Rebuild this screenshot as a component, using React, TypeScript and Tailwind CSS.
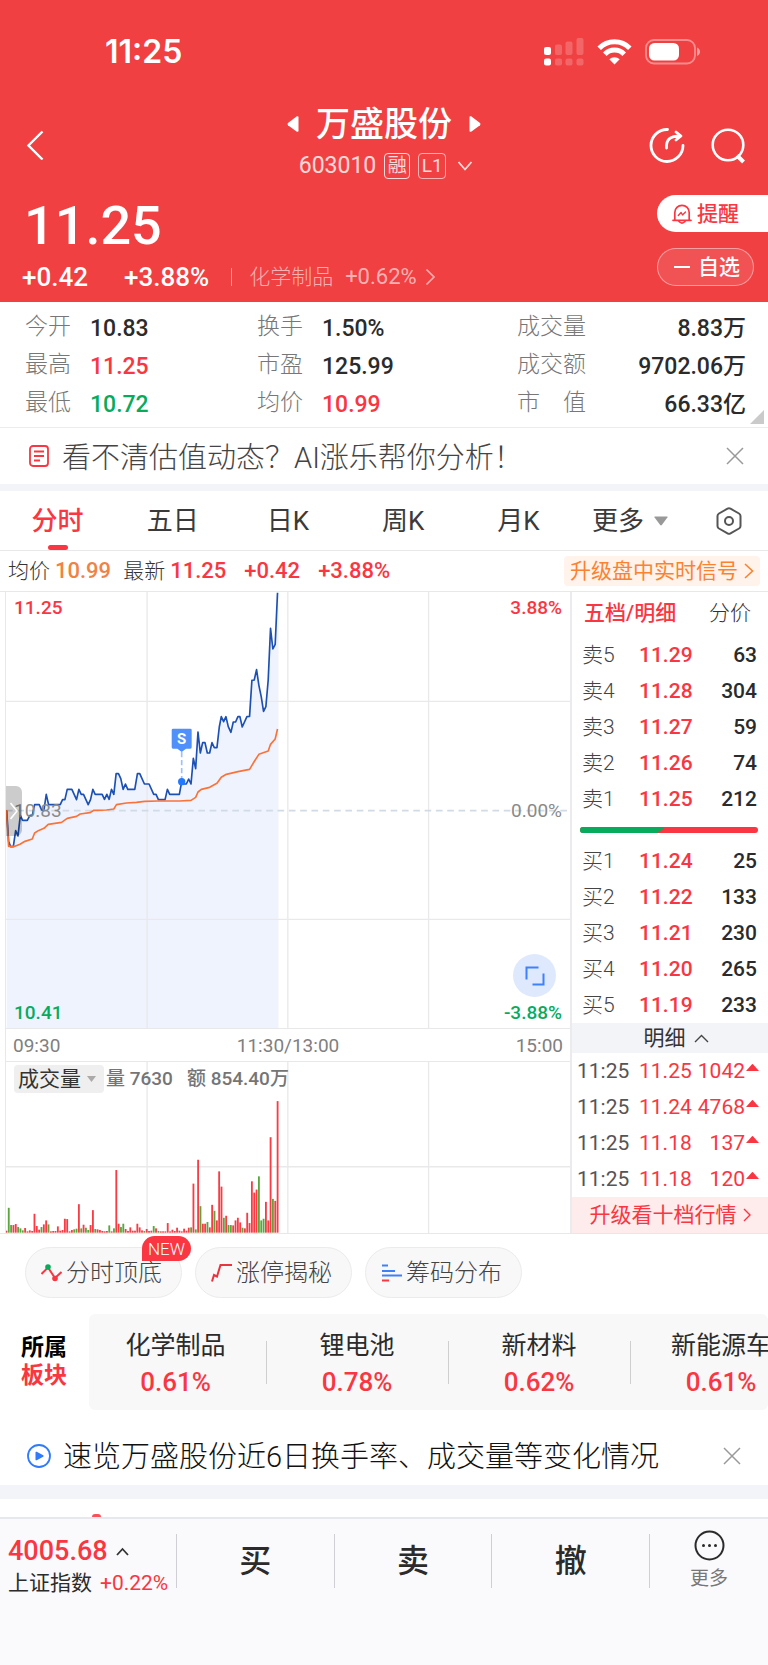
import React from "react";

const RED = "text-[#f93641]";
const GREEN = "text-[#08ab5c]";
const INK = "text-[#2b2b2b]";

const stats = [
  [
    { label: "今开", value: "10.83", tone: INK },
    { label: "最高", value: "11.25", tone: RED },
    { label: "最低", value: "10.72", tone: GREEN },
  ],
  [
    { label: "换手", value: "1.50%", tone: INK },
    { label: "市盈", value: "125.99", tone: INK },
    { label: "均价", value: "10.99", tone: RED },
  ],
  [
    { label: "成交量", value: "8.83万", tone: INK },
    { label: "成交额", value: "9702.06万", tone: INK },
    { label: "市　值", value: "66.33亿", tone: INK },
  ],
];

const sells = [
  ["卖5", "11.29", "63"],
  ["卖4", "11.28", "304"],
  ["卖3", "11.27", "59"],
  ["卖2", "11.26", "74"],
  ["卖1", "11.25", "212"],
];

const buys = [
  ["买1", "11.24", "25"],
  ["买2", "11.22", "133"],
  ["买3", "11.21", "230"],
  ["买4", "11.20", "265"],
  ["买5", "11.19", "233"],
];

const trades = [
  ["11:25", "11.25", "1042"],
  ["11:25", "11.24", "4768"],
  ["11:25", "11.18", "137"],
  ["11:25", "11.18", "120"],
];

const sectors = [
  ["化学制品", "0.61%"],
  ["锂电池", "0.78%"],
  ["新材料", "0.62%"],
  ["新能源车", "0.61%"],
];

const priceLine =
  "20,692 26,785 32,800 40,800 47,752 54,768 61,706 68,721 82,721 90,706 97,706 104,674 118,674 125,690 132,690 139,643 146,674 181,674 188,659 195,659 202,628 216,628 230,659 237,628 244,643 251,643 265,674 272,659 279,628 286,643 307,643 314,658 321,643 328,658 335,628 342,643 349,581 356,581 363,596 370,628 377,612 384,628 405,628 413,581 420,581 434,612 448,612 462,643 469,643 476,659 496,659 503,628 510,643 539,643 546,605 553,612 560,612 567,597 574,612 581,535 588,566 595,456 602,519 609,488 616,488 623,519 630,519 637,488 644,503 652,503 659,441 665,410 672,425 679,410 686,440 694,457 701,426 708,426 715,410 721,410 728,441 742,410 750,409 757,301 764,300 771,269 778,316 785,350 792,394 799,380 806,300 813,145 820,207 827,193 834,38";

const averageLine =
  "19,690 26,799 45,799 60,793 75,784 97,777 104,759 115,752 132,745 145,733 185,727 202,715 230,709 241,702 270,698 282,691 320,690 342,687 350,674 380,669 410,667 435,664 475,663 540,663 574,661 588,652 595,636 605,628 630,622 652,610 665,592 680,583 715,575 750,568 765,543 778,523 806,513 813,493 827,477 834,447";

// Traded volume per minute; a negative number marks a falling minute.
const volumes = [
  6, -75, -23, 23, 26, -17, -13, -7, 14, 4, 7, 5, 57, 20, 9, -17, 25, 37, -25, 4, 5, 5, 19, 6, 8, 42, 41, 4, 8, -10,
  -12, 86, -13, 24, -15, -8, 23, 68, -11, 10, 8, 5, 4, 5, -22, 4, -13, 189, 27, -17, -27, 11, 5, 16, 6, 6, 27, 16, 7,
  -5, 11, 5, 6, -20, 13, -5, 4, 4, 4, 29, 4, 9, 5, 15, 6, 4, 12, 6, 15, -16, 148, -10, 220, -80, 27, 27, -32, 16, 84,
  -66, 37, 185, 139, -45, 51, -23, -23, 22, 37, 45, 31, -15, 13, 60, 29, 155, 121, 130, -170, -37, -42, 93, 37, 288,
  -102, 96, 397,
];

function StatusBar() {
  return (
    <div className="flex h-20 items-center justify-between pt-6 pr-[67px] pl-[105px]">
      <span className="font-[Inter,sans-serif] text-[32px] leading-10 font-semibold">11:25</span>
      <div className="flex items-center gap-[13px]">
        <svg className="h-7 w-10" viewBox="0 0 40 28" fill="#fff" aria-hidden="true">
          <rect x="0" y="9" width="7" height="8" rx="2" />
          <rect x="0" y="20.500" width="7" height="7" rx="2" />
          <g opacity="0.2">
            <rect x="11" y="6.500" width="7" height="10.500" rx="2" />
            <rect x="11" y="20.500" width="7" height="7" rx="2" />
            <rect x="21.500" y="3.500" width="7" height="13.500" rx="2" />
            <rect x="21.500" y="20.500" width="7" height="7" rx="2" />
            <rect x="32.500" y="0" width="7" height="17" rx="2" />
            <rect x="32.500" y="20.500" width="7" height="7" rx="2" />
          </g>
        </svg>
        <svg className="h-[26px] w-[35px]" viewBox="0 0 35 26" fill="none" stroke="#fff" strokeWidth="5" aria-hidden="true">
          <path d="M2.200 9.200A21.500 21.500 0 0 1 32.800 9.200" />
          <path d="M7.800 15.200A13.500 13.500 0 0 1 27.200 15.200" />
          <path d="M17.500 25.500l-5.200-5.200a7.400 7.400 0 0 1 10.400 0z" fill="#fff" stroke="none" />
        </svg>
        <svg className="h-[26px] w-14" viewBox="0 0 56 26" aria-hidden="true">
          <rect x="1" y="1" width="49" height="23.500" rx="8" fill="none" stroke="#fff" strokeOpacity="0.4" strokeWidth="1.800" />
          <rect x="4" y="4" width="30" height="17.500" rx="5.500" fill="#fff" />
          <path d="M52 8.500c4 1.500 4 7 0 8.500z" fill="#fff" fillOpacity="0.5" />
        </svg>
      </div>
    </div>
  );
}

function Header() {
  return (
    <header className="bg-[#f04042] text-white">
      <StatusBar />
      <div className="flex h-[109px] items-start justify-between px-[22px]">
        <button type="button" aria-label="返回" className="mt-12 w-[120px] pl-1">
          <svg className="h-8 w-5" viewBox="0 0 20 32" fill="none" stroke="#fff" strokeWidth="2.400">
            <path d="M16.500 3.500L2.500 17.500l14 14" />
          </svg>
        </button>
        <div className="flex flex-col items-center pt-[22px]">
          <div className="flex items-center gap-[17px]">
            <button type="button" aria-label="上一只">
              <svg className="h-4 w-3" viewBox="0 0 12 16" fill="#fff">
                <path d="M11.500 1v14c0 1-1 1-2 .4L1 9.200Q0 8 1 7L9.500.6c1-.6 2-.6 2 .4z" />
              </svg>
            </button>
            <h1 className="text-[34px] leading-[44px] font-medium">万盛股份</h1>
            <button type="button" aria-label="下一只">
              <svg className="h-4 w-3" viewBox="0 0 12 16" fill="#fff">
                <path d="M.500 1v14c0 1 1 1 2 .4L11 9.200Q12 8 11 7L2.500.6C1.500 0 .500 0 .500 1z" />
              </svg>
            </button>
          </div>
          <button type="button" className="flex h-10 items-center gap-2 pl-1 text-white/80">
            <span className="text-[23px] leading-7">603010</span>
            <span className="flex h-[26px] w-[26px] items-center justify-center rounded border border-white/80 text-[19px] leading-6">融</span>
            <span className="flex h-[26px] w-7 items-center justify-center rounded border border-white/60 text-[19px] leading-6">L1</span>
            <svg className="ml-[3px] h-3 w-4" viewBox="0 0 16 12" fill="none" stroke="currentColor" strokeWidth="1.800">
              <path d="M1.500 2L8 9.500 14.500 2" />
            </svg>
          </button>
        </div>
        <div className="flex w-[120px] justify-end gap-[25px] pt-12">
          <button type="button" aria-label="分享">
            <svg className="h-9 w-9" viewBox="0 0 36 36" fill="none" stroke="#fff" strokeWidth="2.800" strokeLinecap="round" strokeLinejoin="round">
              <path d="M18.500 1.500A16 16 0 1 0 34 17.500" />
              <path d="M17.500 20c-.5-9 4-12 14-12M27 4l5 4-5 4" />
            </svg>
          </button>
          <button type="button" aria-label="搜索">
            <svg className="h-9 w-9" viewBox="0 0 36 36" fill="none" stroke="#fff" strokeWidth="2.600">
              <circle cx="18" cy="17" r="15.300" />
              <path d="M27 27.500l6.500 6.500" strokeWidth="4" />
            </svg>
          </button>
        </div>
      </div>
      <div className="flex justify-between pb-[10px]">
        <div className="pl-[22px]">
          <div className="h-[73px] pl-[2px] text-[54px] leading-[73px] font-medium">11.25</div>
          <div className="flex h-[30px] items-center leading-[30px]">
            <span className="text-[26px] font-medium">+0.42</span>
            <span className="ml-9 text-[26px] font-medium">+3.88%</span>
            <span className="ml-[22px] h-[18px] w-px bg-white/50" />
            <a href="#sector" className="ml-[17px] flex items-center text-white/60">
              <span className="text-[21px] font-light">化学制品</span>
              <span className="ml-3 text-[22px]">+0.62%</span>
              <svg className="ml-2 h-[18px] w-3" viewBox="0 0 12 18" fill="none" stroke="currentColor" strokeWidth="1.600">
                <path d="M1.500 1.500L9 9l-7.500 7.500" />
              </svg>
            </a>
          </div>
        </div>
        <div className="flex w-[111px] flex-col gap-4 pt-[6px]">
          <button type="button" className="flex h-[37px] items-center gap-[5px] rounded-l-full bg-white pl-[15px] text-[21px] leading-7 font-medium text-[#f93641]">
            <svg className="h-5 w-5" viewBox="0 0 20 20" fill="none" stroke="currentColor" strokeWidth="1.700" strokeLinecap="round" strokeLinejoin="round">
              <path d="M2.800 16V8.500a7.200 7.200 0 0 1 14.400 0V16M1 16.300h18M7 17.500q3 3 6 0" />
              <path d="M6.300 11.500l2.800-3 1.400 2.500 3-3" strokeWidth="1.400" />
            </svg>
            提醒
          </button>
          <button type="button" className="flex h-[38px] w-[97px] items-center gap-2 rounded-full border border-white/45 bg-white/10 pl-4 text-[21px] leading-7 font-medium">
            <span className="h-[2px] w-4 bg-white" />
            自选
          </button>
        </div>
      </div>
    </header>
  );
}

function Stats() {
  return (
    <section className="relative grid h-[126px] grid-cols-[232px_260px_1fr] border-b border-[#ececee] pt-[6px] pr-[22px] pl-[25px]">
      {stats.map((column, i) => (
        <dl key={i}>
          {column.map((item) => (
            <div key={item.label} className={i === 2 ? "flex h-[38px] items-center justify-between" : "flex h-[38px] items-center"}>
              <dt className={i === 2 ? "text-[23px] leading-8 font-light whitespace-pre text-[#777]" : "w-[65px] text-[23px] leading-8 font-light text-[#777]"}>
                {item.label}
              </dt>
              <dd className={"pt-[3px] text-[23px] leading-8 font-medium " + item.tone}>{item.value}</dd>
            </div>
          ))}
        </dl>
      ))}
      <svg className="absolute right-1 bottom-[3px] h-[14px] w-[14px]" viewBox="0 0 14 14" fill="#cacaca" aria-hidden="true">
        <path d="M14 0v14H0z" />
      </svg>
    </section>
  );
}

function CloseIcon() {
  return (
    <svg className="h-[18px] w-[18px]" viewBox="0 0 18 18" fill="none" stroke="#999" strokeWidth="1.500">
      <path d="M1 1l16 16M17 1L1 17" />
    </svg>
  );
}

function Tabs() {
  const tab = "text-[26px] leading-9 text-[#3a3a3a]";
  return (
    <nav className="flex h-[60px] items-center border-b border-[#e8e8ea] pr-[26px]">
      <button type="button" className="relative h-full flex-1 text-[26px] leading-9 font-medium text-[#f93641]">
        分时
        <span className="absolute inset-x-0 bottom-0 mx-auto h-[5px] w-5 rounded-full bg-[#f93641]" />
      </button>
      <button type="button" className={"flex-1 " + tab}>五日</button>
      <button type="button" className={"flex-1 " + tab}>日K</button>
      <button type="button" className={"flex-1 " + tab}>周K</button>
      <button type="button" className={"flex-1 " + tab}>月K</button>
      <button type="button" className={"ml-4 flex items-center gap-[10px] " + tab}>
        更多
        <svg className="h-[10px] w-[14px]" viewBox="0 0 14 10" fill="#999">
          <path d="M1 .5h12q1 0 .4 1L7.800 9q-.8.800-1.600 0L.6 1.500Q0 .5 1 .5z" />
        </svg>
      </button>
      <button type="button" aria-label="设置" className="ml-[48px]">
        <svg className="h-7 w-[26px]" viewBox="0 0 26 28" fill="none" stroke="#555" strokeWidth="2" strokeLinejoin="round">
          <path d="M11.500 1.700q1.500-.8 3 0l8.500 4.800q1.500.900 1.500 2.500v10q0 1.600-1.500 2.500l-8.500 4.800q-1.500.800-3 0L3 21.500Q1.500 20.600 1.500 19V9Q1.500 7.400 3 6.500z" />
          <circle cx="13" cy="14" r="4" />
        </svg>
      </button>
    </nav>
  );
}

function PriceChart() {
  const label = "absolute text-[19px] leading-6 ";
  return (
    <div className="relative h-[436px]">
      <svg className="h-full w-full" viewBox="18 36 1695 1308" preserveAspectRatio="none" fill="none" aria-hidden="true">
        <polygon points={"20,1344 " + priceLine + " 837,38 837,1344"} fill="#eff3fe" />
        <path d="M442 36V1344M865 36V1344M1288 36V1344M18 364H1713M18 1018H1713" stroke="#e9e9eb" strokeWidth="4" />
        <path d="M18 692H1713" stroke="#d0dbe6" strokeWidth="5" strokeDasharray="20 14" />
        <polyline points={priceLine} stroke="#1c50b5" strokeWidth="5" strokeLinejoin="round" />
        <polyline points={averageLine} stroke="#fb7238" strokeWidth="5" strokeLinejoin="round" />
        <path d="M546 516v90" stroke="#9dc0fb" strokeWidth="5" strokeDasharray="16 8" />
        <circle cx="546" cy="605" r="11" fill="#2079ff" />
        <path d="M520 446h52q4 0 4 4v52q0 4-4 4h-13l-13 10-13-10h-13q-4 0-4-4v-52q0-4 4-4z" fill="#5090fb" />
        <text x="546" y="491" textAnchor="middle" fill="#fff" fontSize="45" fontWeight="700">S</text>
      </svg>
      <span className={label + "top-1 left-2 font-medium text-[#f93641]"}>11.25</span>
      <span className={label + "top-1 right-2 font-medium text-[#f93641]"}>3.88%</span>
      <span className={label + "top-[207px] left-2 text-[#8a8a8a]"}>10.83</span>
      <span className={label + "top-[207px] right-2 text-[#8a8a8a]"}>0.00%</span>
      <span className={label + "bottom-[3px] left-2 font-medium text-[#08ab5c]"}>10.41</span>
      <span className={label + "right-2 bottom-[3px] font-medium text-[#08ab5c]"}>-3.88%</span>
      <button type="button" aria-label="展开侧栏" className="absolute top-[194px] left-0 flex h-[50px] w-4 items-center justify-center rounded-r-md bg-black/20">
        <svg className="h-[18px] w-2" viewBox="0 0 8 18" fill="none" stroke="#fff" strokeWidth="1.600">
          <path d="M.5 1l6.500 8-6.500 8" />
        </svg>
      </button>
      <button type="button" aria-label="全屏" className="absolute right-[14px] bottom-[31px] flex h-[43px] w-[43px] items-center justify-center rounded-full bg-[#dfe9fd]">
        <svg className="h-5 w-5" viewBox="0 0 20 20" fill="none" stroke="#3f80fb" strokeWidth="2">
          <path d="M1.500 13.500V1.500H13.500M18.500 7.500V18.500H7.500" />
        </svg>
      </button>
    </div>
  );
}

function VolumeChart() {
  return (
    <div className="relative h-[172px] border-t border-[#e8e8ea]">
      <svg className="h-full w-full" viewBox="18 185 1695 516" preserveAspectRatio="none" aria-hidden="true">
        <path d="M442 185V701M865 185V701M1288 185V701M18 501H1713" stroke="#e9e9eb" strokeWidth="4" />
        {volumes.map((v, i) => (
          <rect
            key={i}
            x={16.5 + (i * 815) / (volumes.length - 1)}
            y={700 - Math.abs(v)}
            width="5.500"
            height={Math.abs(v)}
            fill={v < 0 ? "#58a63c" : "#fa3b44"}
          />
        ))}
      </svg>
      <div className="absolute top-[3px] left-2 flex items-center text-[19px] leading-7 text-[#757575]">
        <button type="button" className="flex h-7 items-center gap-[6px] rounded bg-[#efefef] pr-2 pl-1 text-[21px] text-[#333]">
          成交量
          <svg className="h-[6px] w-[9px]" viewBox="0 0 9 6" fill="#aaa">
            <path d="M0 0h9L4.500 6z" />
          </svg>
        </button>
        <span className="ml-[2px] font-medium">量 7630</span>
        <span className="ml-[14px] font-medium">额 854.40万</span>
      </div>
    </div>
  );
}

function QuoteRows({ rows }: { rows: string[][] }) {
  return (
    <table className="w-full table-fixed">
      <tbody>
        {rows.map(([name, price, count]) => (
          <tr key={name} className="h-9 leading-9">
            <th scope="row" className="w-[67px] pl-[10px] text-left text-[21px] font-light text-[#444]">{name}</th>
            <td className="text-[21px] font-medium text-[#f93641]">{price}</td>
            <td className="w-20 pr-[11px] text-right text-[21px] font-medium text-[#2b2b2b]">{count}</td>
          </tr>
        ))}
      </tbody>
    </table>
  );
}

function OrderBook() {
  return (
    <aside className="flex flex-col border-l-2 border-[#ebebed]">
      <div className="flex h-[45px] items-center justify-between pr-[17px] pb-1 pl-3 text-[21px] leading-8">
        <button type="button" className="font-medium text-[#f93641]">五档/明细</button>
        <button type="button" className="font-light text-[#333]">分价</button>
      </div>
      <QuoteRows rows={sells} />
      <svg className="mr-[10px] ml-2 my-[10px] h-[6px] self-stretch" viewBox="0 0 177 6" preserveAspectRatio="none" aria-hidden="true">
        <rect width="177" height="6" rx="3" fill="#f93641" />
        <path d="M3 0H85L77 6H3A3 3 0 0 1 3 0z" fill="#08ab5c" />
      </svg>
      <QuoteRows rows={buys} />
      <button type="button" className="flex h-[30px] items-center justify-center gap-2 bg-[#f3f4f8] pl-3 text-[21px] leading-7 text-[#333]">
        明细
        <svg className="h-[9px] w-[15px]" viewBox="0 0 15 9" fill="none" stroke="#444" strokeWidth="1.400">
          <path d="M1 8l6.500-6.500L14 8" />
        </svg>
      </button>
      <table className="w-full table-fixed">
        <tbody>
          {trades.map(([time, price, count]) => (
            <tr key={price + count} className="h-9 text-[21px] leading-9">
              <td className="w-[67px] pl-[5px] text-[#555]">{time}</td>
              <td className="text-[#f93641]">{price}</td>
              <td className="w-[70px] pr-[9px] text-[#f93641]">
                <span className="flex items-center justify-end gap-px">
                  {count}
                  <svg className="mb-2 h-[7px] w-[13px] shrink-0" viewBox="0 0 13 7" fill="#f93641">
                    <path d="M0 7L6 .3q.5-.5 1 0L13 7z" />
                  </svg>
                </span>
              </td>
            </tr>
          ))}
        </tbody>
      </table>
      <button type="button" className="flex flex-1 items-center justify-center gap-[6px] bg-[#feeced] text-[21px] leading-8 text-[#f93641]">
        升级看十档行情
        <svg className="h-[14px] w-2" viewBox="0 0 8 14" fill="none" stroke="currentColor" strokeWidth="1.400">
          <path d="M1 1l6 6-6 6" />
        </svg>
      </button>
    </aside>
  );
}

function Market() {
  return (
    <section>
      <div className="flex h-10 items-center justify-between pr-2 pl-2 leading-8">
        <div className="flex items-center text-[22px] font-medium">
          <span className="text-[21px] font-light text-[#333]">均价</span>
          <span className="ml-[5px] text-[#f08243]">10.99</span>
          <span className="ml-3 text-[21px] font-light text-[#333]">最新</span>
          <span className="ml-[5px] text-[#f93641]">11.25</span>
          <span className="ml-[18px] text-[#f93641]">+0.42</span>
          <span className="ml-[18px] text-[#f93641]">+3.88%</span>
        </div>
        <button type="button" className="flex h-[30px] items-center gap-[6px] rounded bg-[#fff3eb] px-[6px] text-[21px] leading-7 text-[#fb8230]">
          升级盘中实时信号
          <svg className="h-4 w-[10px]" viewBox="0 0 10 16" fill="none" stroke="currentColor" strokeWidth="1.600">
            <path d="M1 1l7.500 7L1 15" />
          </svg>
        </button>
      </div>
      <div className="grid grid-cols-[1fr_198px] border-y border-[#e8e8ea]">
        <div className="ml-[5px] border-l border-[#e8e8ea]">
          <PriceChart />
          <div className="flex h-[33px] items-center justify-between border-t border-[#e8e8ea] px-[7px] pt-[2px] text-[19px] leading-6 text-[#808080]">
            <span>09:30</span>
            <span>11:30/13:00</span>
            <span>15:00</span>
          </div>
          <VolumeChart />
        </div>
        <OrderBook />
      </div>
    </section>
  );
}

function Tools() {
  const chip = "relative flex h-[51px] w-[157px] items-center justify-center gap-1 rounded-full border border-[#ebebeb] bg-[#f8f8f8] pr-1 text-2xl leading-8 font-light text-[#444]";
  return (
    <section className="flex gap-[13px] pt-[13px] pl-[25px]">
      <button type="button" className={chip}>
        <svg className="h-[18px] w-[21px]" viewBox="0 0 21 18" fill="none" stroke="#f93641" strokeWidth="2">
          <path d="M.5 10L7 3.500l7 10.500 6.500-6" />
          <circle cx="7" cy="3" r="2.800" fill="#08ab5c" stroke="none" />
          <circle cx="14" cy="14.500" r="2.800" fill="#f93641" stroke="none" />
        </svg>
        分时顶底
        <span className="absolute -top-3 left-[116px] h-[25px] rounded-[13px] rounded-bl-none bg-[#f93641] px-[6px] text-[17px] leading-[26px] text-white">NEW</span>
      </button>
      <button type="button" className={chip}>
        <svg className="h-[18px] w-[21px]" viewBox="0 0 21 18" fill="none" stroke="#e93440" strokeWidth="2">
          <path d="M1 17.500l2-6.500 3 1.500L9.500 1H21" />
        </svg>
        涨停揭秘
      </button>
      <button type="button" className={chip}>
        <svg className="h-[18px] w-[21px]" viewBox="0 0 21 18" fill="none" stroke="#3d80f7" strokeWidth="2">
          <path d="M1 1.500h6M1 7h13M1 11.500h20" />
          <path d="M1 16.500h7" stroke="#f93641" />
        </svg>
        筹码分布
      </button>
    </section>
  );
}

function Sectors() {
  return (
    <section id="sector" className="flex items-center overflow-hidden pt-4">
      <h2 className="w-[89px] shrink-0 pl-[21px] text-[23px] leading-7 font-bold text-black">
        所属
        <br />
        <span className="text-[#f93641]">板块</span>
      </h2>
      <ul className="flex h-24 grow items-center overflow-hidden rounded-md bg-[#f8f8f8]">
        {sectors.map(([name, change], i) => (
          <li
            key={name}
            className={
              i === 0
                ? "flex w-[177px] shrink-0 items-center justify-center pr-1"
                : "relative flex w-[182px] shrink-0 items-center justify-center before:absolute before:left-0 before:h-[43px] before:w-px before:bg-[#cfcfcf]"
            }
          >
            <a href="#sector" className="flex flex-col items-center pt-1 whitespace-nowrap">
              <span className="text-[25px] leading-9 text-[#2b2b2b]">{name}</span>
              <span className="text-[26px] leading-9 font-medium text-[#f93641]">{change}</span>
            </a>
          </li>
        ))}
      </ul>
    </section>
  );
}

function BottomBar() {
  const action = "h-[54px] flex-1 border-l border-[#d0d0d4] text-[32px] leading-[54px] font-medium text-[#2b2b2b]";
  return (
    <footer className="flex grow items-start border-t-2 border-[#e7e7ee] bg-[#fafafc] pt-[15px]">
      <button type="button" className="w-[176px] shrink-0 pl-2 text-left">
        <span className="flex h-[34px] items-center gap-2 text-[27px] leading-[34px] font-medium text-[#f93641]">
          4005.68
          <svg className="h-[9px] w-[13px]" viewBox="0 0 13 9" fill="none" stroke="#333" strokeWidth="1.800">
            <path d="M1 8l5.500-6L12 8" />
          </svg>
        </span>
        <span className="flex h-[30px] items-center gap-2 leading-[30px] whitespace-nowrap">
          <span className="text-[21px] text-[#2b2b2b]">上证指数</span>
          <span className="text-[21px] text-[#f93641]">+0.22%</span>
        </span>
      </button>
      <button type="button" className={action}>买</button>
      <button type="button" className={action}>卖</button>
      <button type="button" className={action}>撤</button>
      <button type="button" className="h-[54px] w-[119px] shrink-0 border-l border-[#d0d0d4] text-[19px] leading-6 text-[#777]">
        <span className="-mt-1 flex flex-col items-center gap-[6px]">
          <svg className="h-[31px] w-[31px]" viewBox="0 0 31 31" fill="none" stroke="#2b2b2b" strokeWidth="2">
            <circle cx="15.500" cy="15.500" r="14" />
            <g fill="#2b2b2b" stroke="none">
              <circle cx="9.500" cy="15.500" r="1.500" />
              <circle cx="15.500" cy="15.500" r="1.500" />
              <circle cx="21.500" cy="15.500" r="1.500" />
            </g>
          </svg>
          更多
        </span>
      </button>
    </footer>
  );
}

export default function App() {
  return (
    <div className="flex min-h-screen w-full flex-col overflow-x-hidden bg-white font-[Roboto,'Noto_Sans_CJK_SC',sans-serif]">
      <Header />
      <Stats />
      <section className="flex h-14 items-center pr-6 pl-[29px]">
        <svg className="h-[22px] w-5" viewBox="0 0 20 22" fill="none" stroke="#f93641" strokeWidth="1.800" aria-hidden="true">
          <rect x="1" y="1" width="18" height="20" rx="3" />
          <path d="M5 6.500h10M5 11h10M5 15.500h6" />
        </svg>
        <a href="#analysis" className="ml-[13px] grow pt-[3px] text-[29px] leading-10 font-light text-[#444]">看不清估值动态？AI涨乐帮你分析！</a>
        <button type="button" aria-label="关闭"><CloseIcon /></button>
      </section>
      <div className="h-[7px] bg-[#f3f4f9]" />
      <Tabs />
      <Market />
      <Tools />
      <Sectors />
      <section className="flex h-[75px] items-center pt-4 pr-[27px] pl-[27px]">
        <svg className="h-6 w-6" viewBox="0 0 24 24" aria-hidden="true">
          <circle cx="12" cy="12" r="11" fill="none" stroke="#2e7bff" strokeWidth="1.800" />
          <path d="M8.500 8.500q0-1.200 1.200-.7l6.500 3.500q1 .7 0 1.400l-6.500 3.500q-1.200.5-1.200-.7z" fill="#2e7bff" />
        </svg>
        <a href="#summary" className="ml-3 grow pt-[3px] text-[29px] leading-10 font-light text-[#111]">速览万盛股份近6日换手率、成交量等变化情况</a>
        <button type="button" aria-label="关闭"><CloseIcon /></button>
      </section>
      <div className="h-[14px] bg-[#f3f4f9]" />
      <div className="flex h-[18px] items-end pl-[92px]">
        <span className="h-[3px] w-[9px] rounded-t-full bg-[#f9505a]" />
      </div>
      <BottomBar />
    </div>
  );
}
